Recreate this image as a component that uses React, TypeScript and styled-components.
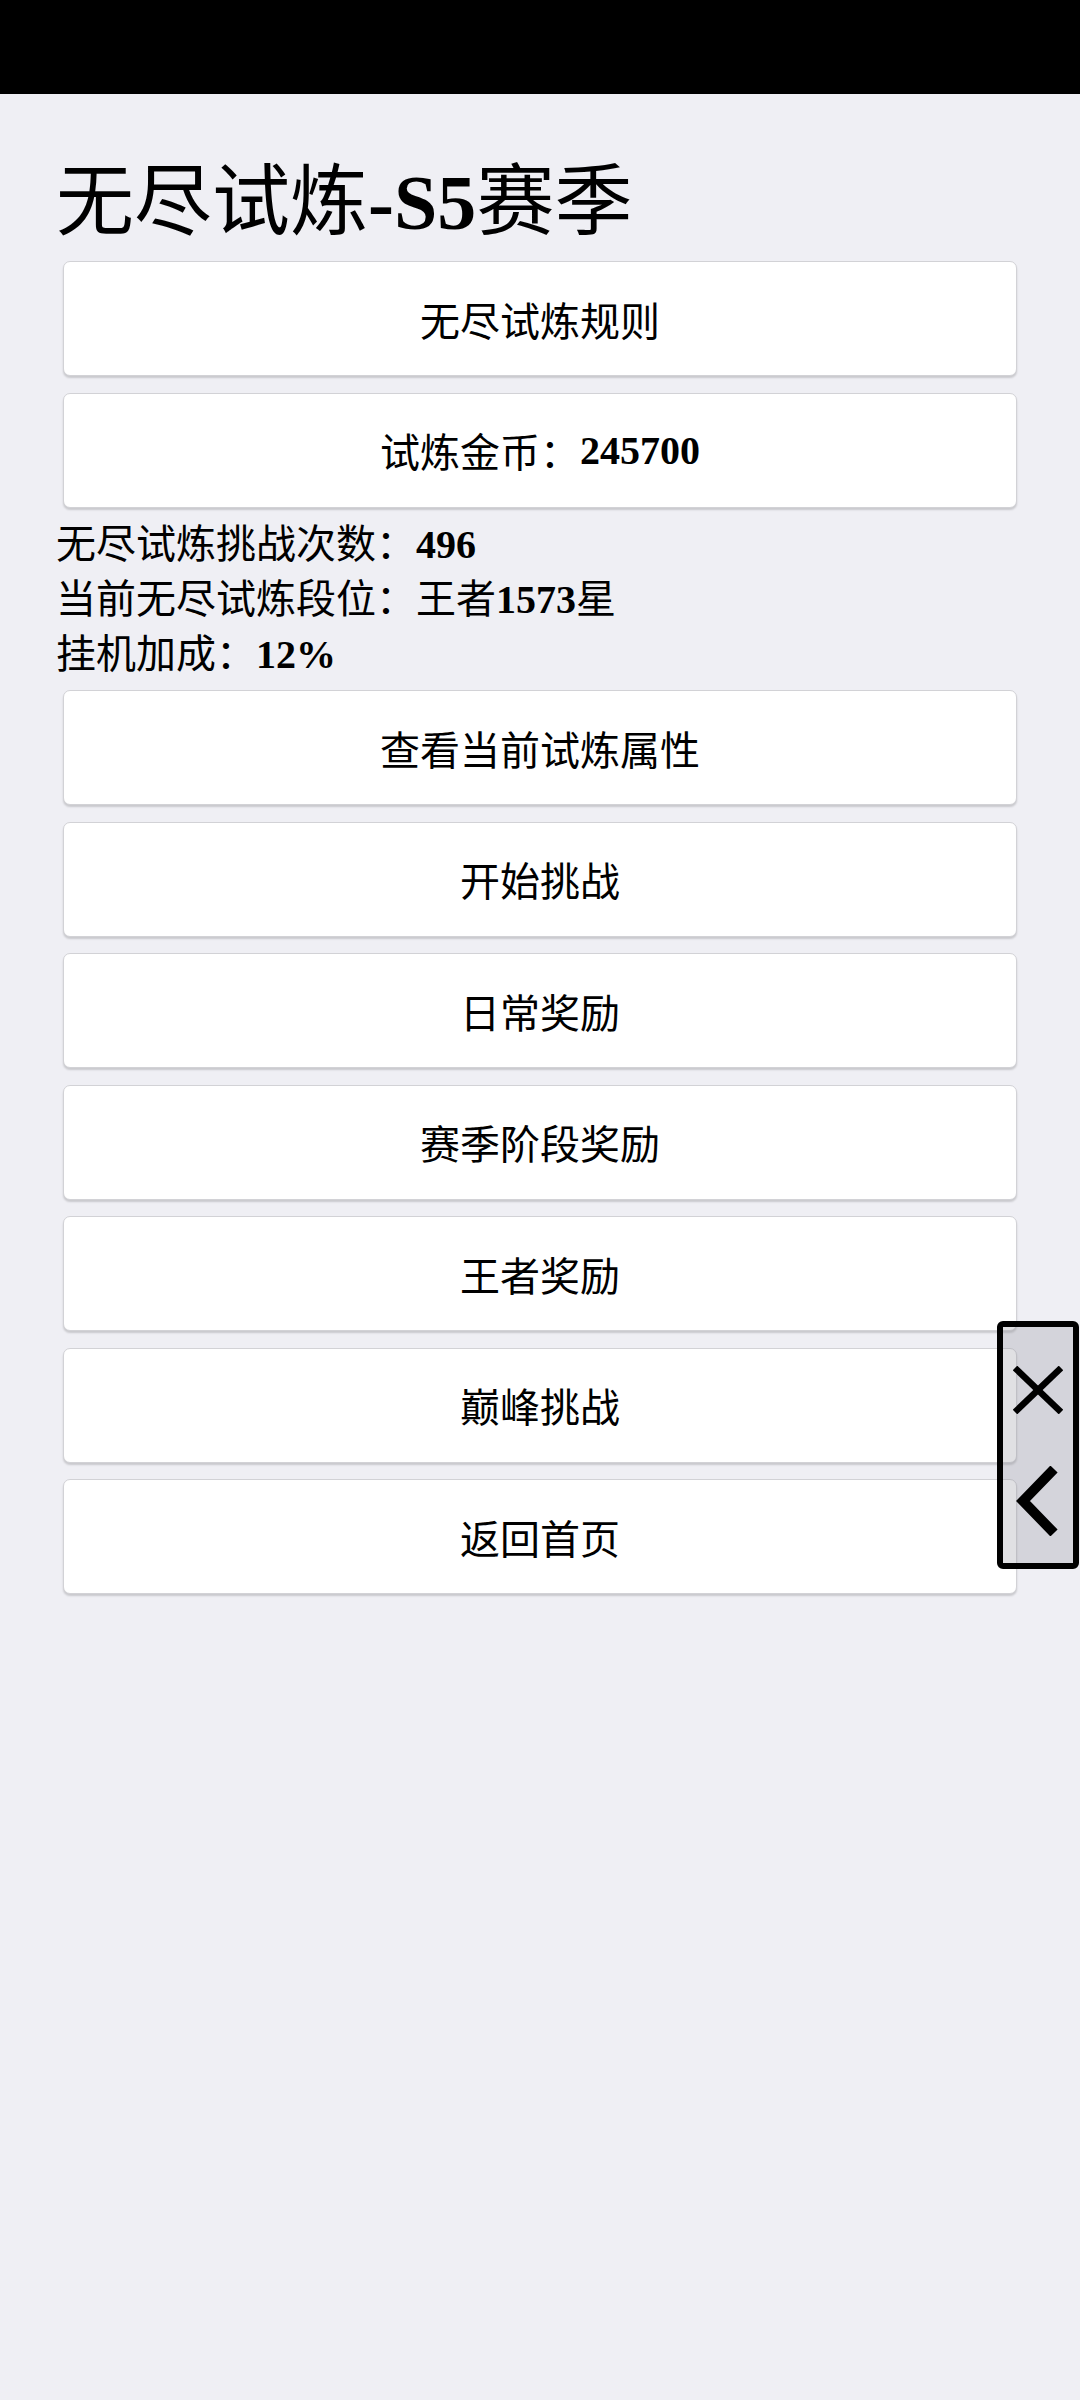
import React from 'react';
import styled, { createGlobalStyle } from 'styled-components';

// Estilos globais da página
const GlobalStyle = createGlobalStyle`
  html, body {
    margin: 0;
    padding: 0;
    background: #efeff4;
  }

  body {
    min-height: 100vh;
    font-family: "Liberation Serif", "Noto Sans CJK SC", serif;
    color: #000;
  }
`;

// Barra de status do topo
const StatusBar = styled.div`
  height: 94px;
  background: #000;
`;

const Page = styled.main`
  padding: 58px 56px 0;
  display: flex;
  flex-direction: column;
`;

const Title = styled.h1`
  margin: 0;
  font-size: 78px;
  line-height: 101px;
  font-weight: 400;
  font-family: "Liberation Serif", "Noto Sans CJK SC", serif;
`;

// Partes latinas / números em negrito
const Latin = styled.span`
  font-weight: 700;
`;

const MenuButton = styled.button`
  box-sizing: border-box;
  margin: 8px 7px 8.5px;
  height: 115px;
  display: flex;
  align-items: center;
  justify-content: center;
  background: #fff;
  border: 1px solid #d2d2d6;
  border-radius: 7px;
  box-shadow: 0 2px 2px rgba(0, 0, 0, 0.16);
  font-family: "Liberation Serif", "Noto Sans CJK SC", serif;
  font-size: 40px;
  font-weight: 400;
  color: #000;
  padding: 0;
  cursor: pointer;
`;

const InfoBlock = styled.div`
  display: flex;
  flex-direction: column;
  padding-top: 1px;
`;

const InfoLine = styled.div`
  font-size: 40px;
  line-height: 55px;
  white-space: nowrap;
`;

// Painel flutuante lateral (fica por cima do conteúdo)
const FloatPanel = styled.div`
  position: absolute;
  left: 997px;
  top: 1321px;
  box-sizing: border-box;
  width: 82px;
  height: 248px;
  padding-top: 39px;
  border: 6px solid #000;
  border-radius: 6px;
  background: rgba(140, 140, 150, 0.27);
  display: flex;
  flex-direction: column;
  align-items: center;
  gap: 52px;
`;

const PanelIcon = styled.div<{ $shift?: number }>`
  display: flex;
  align-items: center;
  justify-content: center;
  margin-left: ${p => p.$shift ?? 0}px;

  svg {
    display: block;
  }
`;

const CloseIcon = () => (
  <svg width="50" height="48" viewBox="0 0 50 48">
    <line x1="2" y1="2" x2="48" y2="46" stroke="#000" strokeWidth="6.5" />
    <line x1="48" y1="2" x2="2" y2="46" stroke="#000" strokeWidth="6.5" />
  </svg>
);

const BackIcon = () => (
  <svg width="44" height="70" viewBox="0 0 44 70">
    <polyline
      points="40,3 9,35 40,67"
      fill="none"
      stroke="#000"
      strokeWidth="10"
      strokeLinejoin="miter"
    />
  </svg>
);

const menuItems = [
  '查看当前试炼属性',
  '开始挑战',
  '日常奖励',
  '赛季阶段奖励',
  '王者奖励',
  '巅峰挑战',
  '返回首页',
];

export default function App() {
  return (
    <>
      <GlobalStyle />
      <StatusBar />
      <Page>
        <Title>
          无尽试炼<Latin>-S5</Latin>赛季
        </Title>

        <MenuButton>无尽试炼规则</MenuButton>
        <MenuButton>
          试炼金币：<Latin>245700</Latin>
        </MenuButton>

        <InfoBlock>
          <InfoLine>
            无尽试炼挑战次数：<Latin>496</Latin>
          </InfoLine>
          <InfoLine>
            当前无尽试炼段位：王者<Latin>1573</Latin>星
          </InfoLine>
          <InfoLine>
            挂机加成：<Latin>12%</Latin>
          </InfoLine>
        </InfoBlock>

        {menuItems.map(item => (
          <MenuButton key={item}>{item}</MenuButton>
        ))}
      </Page>

      <FloatPanel>
        <PanelIcon>
          <CloseIcon />
        </PanelIcon>
        <PanelIcon $shift={-4}>
          <BackIcon />
        </PanelIcon>
      </FloatPanel>
    </>
  );
}
